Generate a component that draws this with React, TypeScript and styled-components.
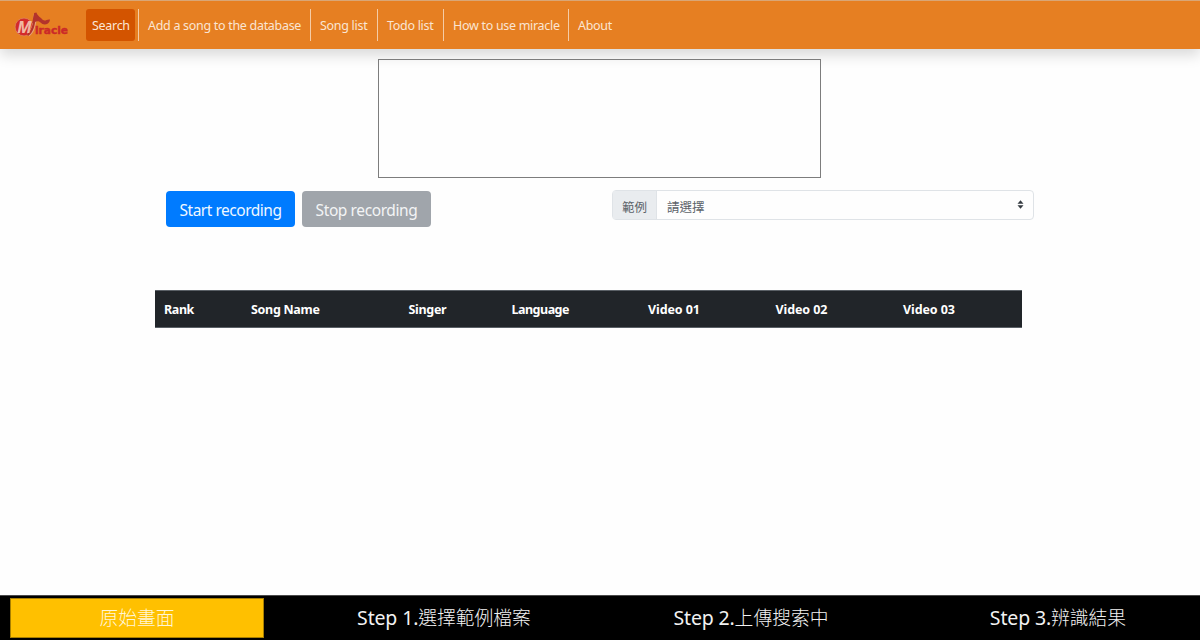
import React from 'react';
import styled, { createGlobalStyle } from 'styled-components';

const GlobalStyle = createGlobalStyle`
  * { box-sizing: border-box; }
  body {
    margin: 0;
    background: #fefefe;
    font-family: "Noto Sans", "Noto Sans CJK TC", sans-serif;
    overflow: hidden;
  }
`;

const Page = styled.div`
  width: 1200px;
  height: 640px;
  display: flex;
  flex-direction: column;
`;

const Navbar = styled.nav`
  height: 49px;
  flex: none;
  display: flex;
  align-items: flex-start;
  padding: 8px 0 0 14px;
  background: #e67f22;
  border-top: 1px solid #d9a676;
  box-shadow: 0 6px 13px rgba(0, 0, 0, 0.15);
`;

const Brand = styled.a`
  width: 72px;
  height: 32px;
  flex: none;
`;

const NavItem = styled.a<{ $width: number; $active?: boolean; $divided?: boolean }>`
  width: ${(p) => p.$width}px;
  height: 32px;
  flex: none;
  padding-left: ${(p) => (p.$active ? 6 : 9)}px;
  margin-right: ${(p) => (p.$active ? 3 : 0)}px;
  line-height: 33px;
  font-size: 12.5px;
  letter-spacing: -0.3px;
  white-space: nowrap;
  color: ${(p) => (p.$active ? '#fbe6d6' : '#fae5d3')};
  background: ${(p) => (p.$active ? '#d35400' : 'transparent')};
  border-radius: ${(p) => (p.$active ? '3px' : '0')};
  border-left: ${(p) => (p.$divided ? '1px solid #f5ccA6' : '0')};
`;

const Main = styled.main`
  flex: 1;
  display: flex;
  flex-direction: column;
  padding-top: 10px;
`;

const Waveform = styled.div`
  width: 443px;
  height: 119px;
  margin-left: 378px;
  border: 1px solid #7d7d7d;
`;

const Controls = styled.div`
  display: flex;
  align-items: flex-start;
  gap: 7px;
  margin: 13px 0 0 166px;
`;

const Button = styled.button<{ $muted?: boolean }>`
  width: 129px;
  height: 36px;
  padding: 0;
  border: 0;
  border-radius: 4px;
  font-family: inherit;
  font-size: 15.5px;
  line-height: 38px;
  letter-spacing: ${(p) => (p.$muted ? -0.4 : -0.48)}px;
  white-space: nowrap;
  color: ${(p) => (p.$muted ? '#f3f4f5' : '#eff7ff')};
  background: ${(p) => (p.$muted ? '#a0a5ab' : '#007bff')};
`;

const InputGroup = styled.div`
  width: 422px;
  height: 30px;
  display: flex;
  margin: -1px 0 0 174px;
  border: 1px solid #dfe3e7;
  border-radius: 4px;
  font-size: 12.5px;
  line-height: 33px;
  color: #5c636a;
`;

const Prefix = styled.span`
  width: 44px;
  padding-left: 9px;
  background: #e9ecef;
  border-right: 1px solid #dfe3e7;
`;

const Select = styled.div`
  flex: 1;
  display: flex;
  justify-content: space-between;
  padding: 0 9px 0 10px;
`;

const Arrows = styled.svg`
  width: 7px;
  height: 9px;
  margin-top: 9px;
`;

const TableHead = styled.div`
  width: 867px;
  height: 38px;
  display: flex;
  margin: 63px 0 0 155px;
  padding-left: 9px;
  background: #212529;
  border: solid #5a6066;
  border-width: 1px 0;
`;

const HeadCell = styled.div<{ $width: number; $spacing: number }>`
  width: ${(p) => p.$width}px;
  flex: none;
  font-size: 12.5px;
  font-weight: 700;
  line-height: 38px;
  letter-spacing: ${(p) => p.$spacing}px;
  color: #fff;
`;

const Steps = styled.footer`
  height: 45px;
  flex: none;
  display: flex;
  gap: 53px;
  padding: 2px 0 2px 10px;
  background: #000;
  border-top: 1px solid #4a4a4a;
`;

const Step = styled.div<{ $active?: boolean }>`
  width: 254px;
  height: 40px;
  flex: none;
  border: 1px solid ${(p) => (p.$active ? '#a87f00' : 'transparent')};
  background: ${(p) => (p.$active ? '#ffc000' : 'transparent')};
  color: ${(p) => (p.$active ? '#fff6d8' : '#f2f2f2')};
  font-size: 18.8px;
  font-weight: 300;
  line-height: 38px;
  text-align: center;
  white-space: nowrap;
`;

const StepNumber = styled.span`
  font-size: 19.5px;
  font-weight: 400;
  letter-spacing: -0.15px;
`;

const Logo = () => (
  <svg width="58" height="32" viewBox="0 0 58 32">
    <circle cx="10" cy="18" r="8.9" fill="#d32b2a" stroke="#de8a62" strokeWidth="0.7" />
    <path d="M14 26 C19 23 20.5 16 21.5 5" fill="none" stroke="#e5a078" strokeWidth="3.4" />
    <path d="M13.5 26 C18.5 23 20 16 21.3 4.5" fill="none" stroke="#b5322b" strokeWidth="2.2" />
    <path d="M20.2 4 L22.4 3.4 C23.5 7 27 8.5 29 11 C31.5 12.5 32.5 10 36 10.5 L35.5 12.5 C34 16 29 16.5 26.5 13.5 C24 11 21 12.5 18 14.5 Z" fill="#b3332b" />
    <text x="3.2" y="24" fontFamily="Open Sans, sans-serif" fontStyle="italic" fontWeight="700" fontSize="16" textLength="14.5" lengthAdjust="spacingAndGlyphs" fill="#f0b9a4">M</text>
    <text x="21" y="24.5" fontFamily="DejaVu Sans, sans-serif" fontWeight="700" fontSize="10" textLength="33" lengthAdjust="spacingAndGlyphs" fill="#cb2a28" stroke="#cb2a28" strokeWidth="0.4">iracle</text>
  </svg>
);

export default function App() {
  return (
    <>
      <GlobalStyle />
      <Page>
        <Navbar>
          <Brand><Logo /></Brand>
          <NavItem $width={49} $active>Search</NavItem>
          <NavItem $width={172} $divided>Add a song to the database</NavItem>
          <NavItem $width={67} $divided>Song list</NavItem>
          <NavItem $width={66} $divided>Todo list</NavItem>
          <NavItem $width={125} $divided>How to use miracle</NavItem>
          <NavItem $width={60} $divided>About</NavItem>
        </Navbar>
        <Main>
          <Waveform />
          <Controls>
            <Button>Start recording</Button>
            <Button $muted>Stop recording</Button>
            <InputGroup>
              <Prefix>範例</Prefix>
              <Select>
                請選擇
                <Arrows viewBox="0 0 7 9">
                  <path d="M0.5 3.8 L3.5 0.3 L6.5 3.8 Z M0.5 5.2 L3.5 8.7 L6.5 5.2 Z" fill="#343a40" />
                </Arrows>
              </Select>
            </InputGroup>
          </Controls>
          <TableHead>
            <HeadCell $width={87} $spacing={-0.4}>Rank</HeadCell>
            <HeadCell $width={157.5} $spacing={-0.3}>Song Name</HeadCell>
            <HeadCell $width={103} $spacing={-0.3}>Singer</HeadCell>
            <HeadCell $width={136.5} $spacing={-0.5}>Language</HeadCell>
            <HeadCell $width={127.5} $spacing={-0.1}>Video 01</HeadCell>
            <HeadCell $width={127.5} $spacing={-0.1}>Video 02</HeadCell>
            <HeadCell $width={100} $spacing={-0.1}>Video 03</HeadCell>
          </TableHead>
        </Main>
        <Steps>
          <Step $active>原始畫面</Step>
          <Step><StepNumber>Step 1.</StepNumber>選擇範例檔案</Step>
          <Step><StepNumber>Step 2.</StepNumber>上傳搜索中</Step>
          <Step><StepNumber>Step 3.</StepNumber>辨識結果</Step>
        </Steps>
      </Page>
    </>
  );
}
